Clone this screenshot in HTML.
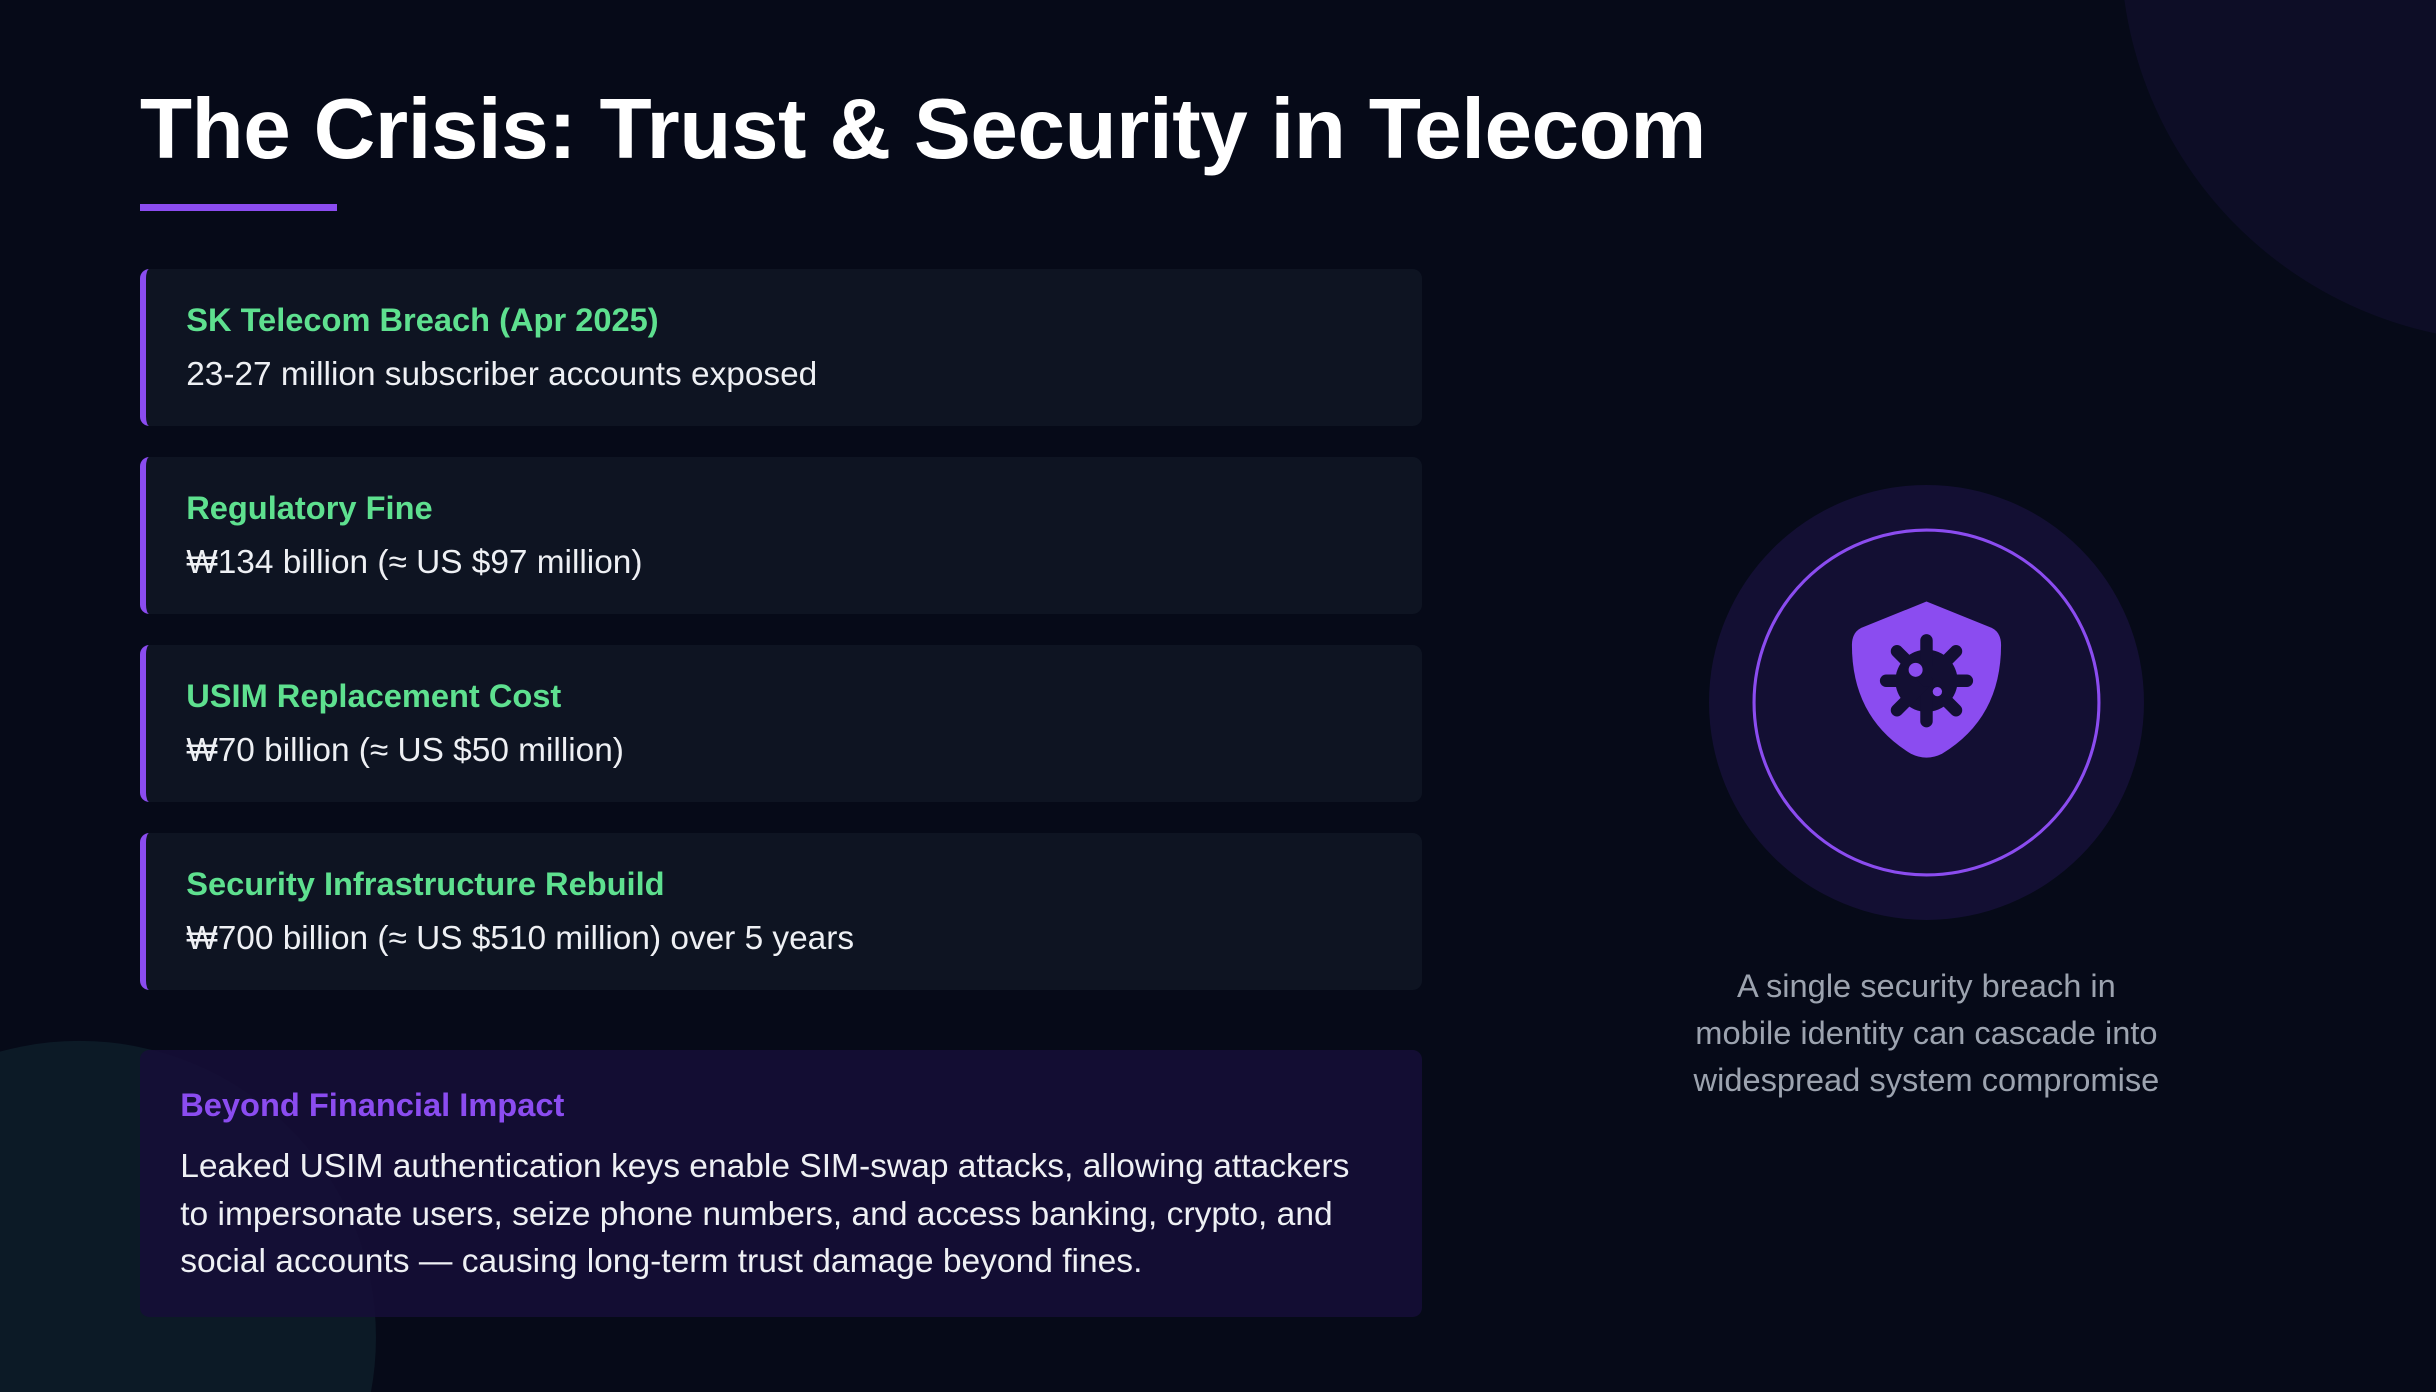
<!DOCTYPE html>
<html><head><meta charset="utf-8"><style>
html,body{margin:0;padding:0;background:#060a18;overflow:hidden;width:2436px;height:1392px}
#w{zoom:1.553571;width:1568px;height:896px;position:relative;overflow:hidden;background:#060a18;font-family:"Liberation Sans",sans-serif;}
.abs{position:absolute}
h1{position:absolute;left:90px;top:52px;margin:0;font-size:55px;font-weight:700;color:#fff;letter-spacing:-0.3px;white-space:nowrap}
.bar{left:90px;top:131px;width:127px;height:5px;background:#8b4cf0}
.card{position:absolute;left:90px;width:825px;height:101px;background:#0e1422;border-radius:6px;border-left:4px solid #8b4cf0;box-sizing:border-box}
.card .h{position:absolute;left:26px;top:21px;font-size:21px;font-weight:700;color:#5ee08f;white-space:nowrap}
.card .b{position:absolute;left:26px;top:56px;font-size:21.5px;color:#eef0f4;white-space:nowrap}
.box{left:90px;top:676px;width:825px;height:172px;background:rgba(22,14,56,0.85);border-radius:6px}
.box .h{position:absolute;left:26px;top:23px;font-size:21px;font-weight:700;color:#8b4cf0}
.box .b{position:absolute;left:26px;top:60px;font-size:21.6px;line-height:30.5px;color:#eef0f4;white-space:nowrap}
.cap{left:1040px;width:400px;top:619px;text-align:center;font-size:21px;line-height:30.5px;color:#9ca3af}
</style></head><body><div id="w">
<svg class="abs" style="left:0;top:0" width="1568" height="896" viewBox="0 0 1568 896">
<circle cx="1620" cy="-35" r="255" fill="#0d0d26"/>
<circle cx="51" cy="861" r="191" fill="#0c1a26"/>
</svg>
<h1>The Crisis: Trust &amp; Security in Telecom</h1>
<div class="abs bar"></div>
<div class="card" style="top:173px"><div class="h">SK Telecom Breach (Apr 2025)</div><div class="b">23-27 million subscriber accounts exposed</div></div>
<div class="card" style="top:294px"><div class="h">Regulatory Fine</div><div class="b">₩134 billion (≈ US $97 million)</div></div>
<div class="card" style="top:415px"><div class="h">USIM Replacement Cost</div><div class="b">₩70 billion (≈ US $50 million)</div></div>
<div class="card" style="top:536px"><div class="h">Security Infrastructure Rebuild</div><div class="b">₩700 billion (≈ US $510 million) over 5 years</div></div>
<div class="abs box"><div class="h">Beyond Financial Impact</div><div class="b">Leaked USIM authentication keys enable SIM-swap attacks, allowing attackers<br>to impersonate users, seize phone numbers, and access banking, crypto, and<br>social accounts — causing long-term trust damage beyond fines.</div></div>
<svg class="abs" style="left:1100px;top:312px" width="280" height="280" viewBox="0 0 280 280">
<circle cx="140" cy="140" r="140" fill="#130f33"/>
<circle cx="140" cy="140" r="111" fill="none" stroke="#8b4cf0" stroke-width="2"/>
<path d="M140 75 L182 92 Q188 95 188 103 Q188 150 150 173 Q140 178 130 173 Q92 150 92 103 Q92 95 98 92 Z" fill="#8b4cf0"/>
<g fill="#130f33" transform="translate(140 126)">
<circle r="20"/>
<g stroke="#130f33" stroke-width="8" stroke-linecap="round">
<line x1="0" y1="0" x2="0" y2="-26"/><line x1="0" y1="0" x2="0" y2="26"/>
<line x1="0" y1="0" x2="26" y2="0"/><line x1="0" y1="0" x2="-26" y2="0"/>
<line x1="0" y1="0" x2="19" y2="19"/><line x1="0" y1="0" x2="-19" y2="19"/>
<line x1="0" y1="0" x2="19" y2="-19"/><line x1="0" y1="0" x2="-19" y2="-19"/>
</g>
<circle cx="-7" cy="-7" r="4.5" fill="#8b4cf0"/>
<circle cx="7" cy="7" r="3" fill="#8b4cf0"/>
</g>
</svg>
<div class="abs cap">A single security breach in<br>mobile identity can cascade into<br>widespread system compromise</div>
</div></body></html>
